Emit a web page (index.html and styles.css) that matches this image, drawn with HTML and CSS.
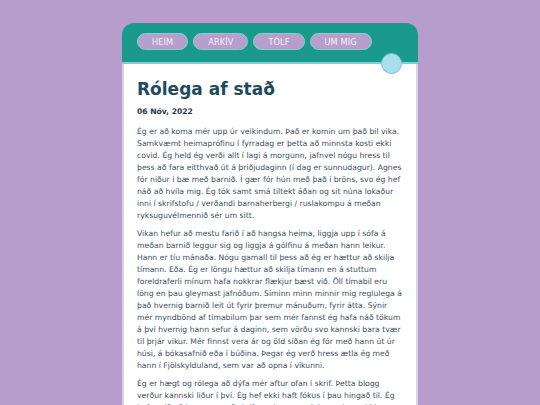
FILE: index.html
```html
<!DOCTYPE html>
<html lang="is">
<head>
<meta charset="utf-8">
<title>Rólega af stað</title>
<link rel="stylesheet" href="styles.css">
</head>
<body>
<div class="card">
  <header class="top">
    <nav class="nav">
      <a class="pill" href="#">HEIM</a>
      <a class="pill" href="#">ARKÍV</a>
      <a class="pill" href="#">TÓLF</a>
      <a class="pill" href="#">UM MIG</a>
    </nav>
    <span class="dot"></span>
  </header>
  <main class="body">
    <h1 class="title">Rólega af stað</h1>
    <p class="date">06 Nóv, 2022</p>
    <p class="para">Ég er að koma mér upp úr veikindum. Það er komin um það bil vika. Samkvæmt heimaprófinu í fyrradag er þetta að minnsta kosti ekki covid. Ég held ég verði allt í lagi á morgunn, jafnvel nógu hress til þess að fara eitthvað út á þriðjudaginn (í dag er sunnudagur). Agnes fór niður í bæ með barnið. Í gær fór hún með það í bröns, svo ég hef náð að hvíla mig. Ég tók samt smá tiltekt áðan og sit núna lokaður inni í skrifstofu / verðandi barnaherbergi / ruslakompu á meðan ryksuguvélmennið sér um sitt.</p>
    <p class="para">Vikan hefur að mestu farið í að hangsa heima, liggja upp í sófa á meðan barnið leggur sig og liggja á gólfinu á meðan hann leikur. Hann er tíu mánaða. Nógu gamall til þess að ég er hættur að skilja tímann. Eða. Ég er löngu hættur að skilja tímann en á stuttum foreldraferli mínum hafa nokkrar flækjur bæst við. Öll tímabil eru löng en þau gleymast jafnóðum. Síminn minn minnir mig reglulega á það hvernig barnið leit út fyrir þremur mánuðum, fyrir átta. Sýnir mér myndbönd af tímabilum þar sem mér fannst ég hafa náð tökum á því hvernig hann sefur á daginn, sem vörðu svo kannski bara tvær til þrjár vikur. Mér finnst vera ár og öld síðan ég fór með hann út úr húsi, á bókasafnið eða í búðina. Þegar ég verð hress ætla ég með hann í Fjölskylduland, sem var að opna í vikunni.</p>
    <p class="para">Ég er hægt og rólega að dýfa mér aftur ofan í skrif. Þetta blogg verður kannski liður í því. Ég hef ekki haft fókus í þau hingað til. Ég hef verið að hugsa um að skrifa meira og reglulegar, kannski bara stuttar færslur um daginn og veginn.</p>
  </main>
</div>
</body>
</html>
```

FILE: styles.css
```css
html, body {
  margin: 0;
  padding: 0;
}
body {
  background: #b69dcc;
  font-family: "DejaVu Sans", Verdana, sans-serif;
  padding-top: 23px;
}
.card {
  width: 296px;
  margin: 0 auto;
}
.top {
  position: relative;
  background: #1a9a8d;
  border-radius: 12px 12px 0 0;
  border-bottom: 2px solid #7fd0d6;
  height: 39px;
  box-sizing: content-box;
}
.nav {
  display: flex;
  gap: 5px;
  padding: 10px 0 0 15px;
}
.pill {
  display: flex;
  align-items: center;
  height: 15px;
  padding: 0 14px;
  border: 1.5px solid #7fd3d3;
  border-radius: 10px;
  background: #b79fcc;
  color: #f4eef8;
  font-size: 8.2px;
  text-decoration: none;
  letter-spacing: 0.1px;
}
.dot {
  position: absolute;
  right: 16px;
  bottom: -12px;
  width: 19px;
  height: 19px;
  border-radius: 50%;
  background: #a9dfeb;
  border: 1.5px solid #6ec9d2;
}
.body {
  background: #ffffff;
  border-left: 2px solid #dcd1e8;
  border-right: 2px solid #dcd1e8;
  padding: 12px 11px 20px 13px;
  min-height: 400px;
}
.title {
  margin: 0;
  font-size: 17px;
  font-weight: bold;
  color: #1f4a5e;
  line-height: 26px;
}
.date {
  margin: 4px 0 8px 0;
  font-size: 7.6px;
  font-weight: bold;
  color: #1f3a48;
  line-height: 12px;
}
.para {
  margin: 0 0 6px 0;
  font-size: 7.7px;
  line-height: 12px;
  color: #3a4f5c;
}
```
